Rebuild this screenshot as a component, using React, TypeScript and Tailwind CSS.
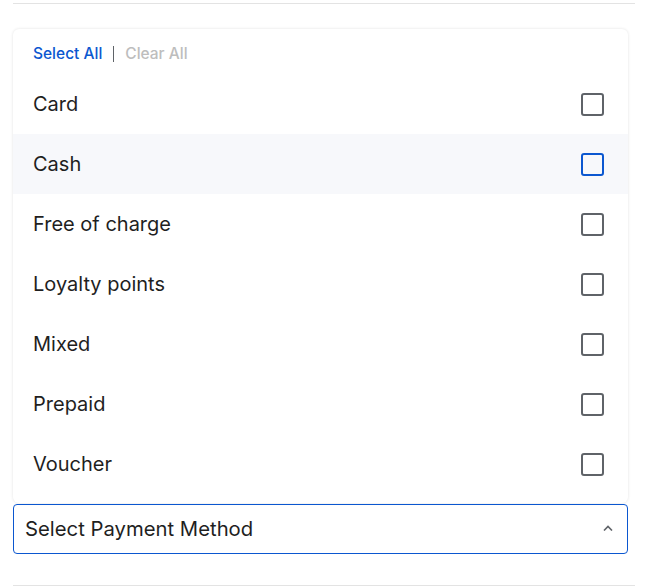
import React, { useState } from "react";

const OPTIONS = ["Card", "Cash", "Free of charge", "Loyalty points", "Mixed", "Prepaid", "Voucher"];

export default function App() {
  const [hovered] = useState("Cash");

  return (
    <div className="w-[646px] h-[586px] bg-white font-['Inter',sans-serif] text-[#202124] overflow-hidden">
      <div className="pl-[13px] pr-[11px] pt-[3px]">
        <div className="h-px bg-[#e3e3e3]" />
      </div>

      <div className="pl-[13px] pr-[18px] pt-[25px]">
        {/* dropdown panel */}
        <div className="bg-white rounded-[6px] shadow-[0_0_3px_rgba(0,0,0,0.12)] pt-[17px] pb-[9px]">
          <div className="flex items-center px-5 h-[16px] text-[15.5px] font-medium">
            <span className="text-[#0b57d0]">Select All</span>
            <span className="mx-[11px] w-px h-[16px] bg-[#5f6368]" />
            <span className="text-[#bdbdbd]">Clear All</span>
          </div>
          <div className="mt-[12px]">
            {OPTIONS.map((o) => {
              const active = o === hovered;
              return (
                <div
                  key={o}
                  className={`flex items-center justify-between h-[60px] pl-5 pr-[24px] ${active ? "bg-[#f7f8fb]" : ""}`}
                >
                  <span className="text-[20px] leading-none text-[#1f1f1f]">{o}</span>
                  <span
                    className={`w-[23px] h-[23px] rounded-[3px] border-[2.5px] ${active ? "border-[#0b57d0]" : "border-[#5f6368]"}`}
                  />
                </div>
              );
            })}
          </div>
        </div>

        {/* select trigger */}
        <div className="mt-px flex items-center justify-between h-[50px] border border-[#0b57d0] rounded-[4px] pl-[11px] pr-[14px]">
          <span className="text-[20.3px] text-[#1f1f1f]">Select Payment Method</span>
          <svg width="10" height="6" viewBox="0 0 10 6" fill="none" className="mb-[2px]">
            <path d="M1 5.5 L5 1.5 L9 5.5" stroke="#5f6368" strokeWidth="1.6" />
          </svg>
        </div>
      </div>

      <div className="pl-[13px] pr-[11px] pt-[31px]">
        <div className="h-px bg-[#e3e3e3]" />
      </div>
    </div>
  );
}
